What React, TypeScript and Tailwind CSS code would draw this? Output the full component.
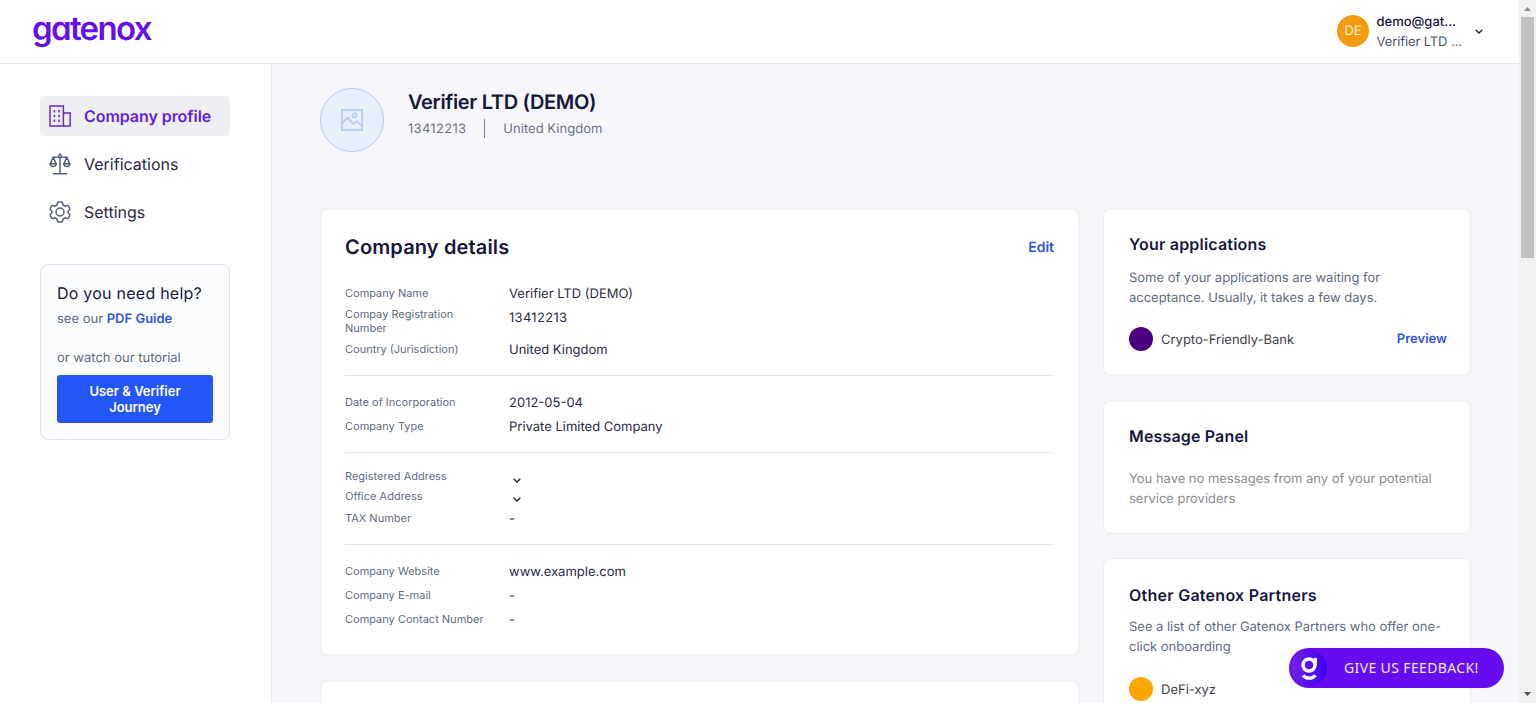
import type { ReactNode } from "react";

function Chevron({ className = "" }: { className?: string }) {
  return (
    <svg viewBox="0 0 8 5" className={className} fill="none" stroke="#23233b" strokeWidth="1.35">
      <path d="M0.7 0.7 L4 4 L7.3 0.7" />
    </svg>
  );
}

function BuildingIcon() {
  return (
    <svg viewBox="0 0 24 24" className="size-6" fill="none" stroke="#6a26d0" strokeWidth="1.5">
      <path d="M2 1.9H15.4V22H2ZM15.4 9.1H22.2V22H15.4" />
      <path d="M6.4 6V8.4M6.4 10.8V13.2M6.4 15.6V18M11 6V8.4M11 10.8V13.2M11 15.6V18" />
    </svg>
  );
}

function ScalesIcon() {
  return (
    <svg viewBox="0 0 24 24" className="size-6" fill="none" stroke="#53607b" strokeWidth="1.5" strokeLinecap="round" strokeLinejoin="round">
      <path d="M12 1.8V21.8M5.5 21.8H18.8M4.6 5.2H8.2C9.5 5.2 10.2 4.5 12 4.5C13.8 4.5 14.5 5.2 15.8 5.2H19.4" />
      <circle cx="12" cy="4.4" r="1.3" fill="#fff" />
      <path d="M5.2 5.4L2.2 11.8H8.2ZM18.8 5.4L15.8 11.8H21.8Z" />
      <path d="M2.2 11.8C2.4 15.4 8 15.4 8.2 11.8M15.8 11.8C16 15.4 21.6 15.4 21.8 11.8" />
    </svg>
  );
}

function GearIcon() {
  return (
    <svg viewBox="0 0 24 24" className="size-6" fill="none" stroke="#53607b" strokeWidth="1.5" strokeLinejoin="round">
      <circle cx="12" cy="12" r="4" />
      <path d="M10.4 2H13.6Q14.3 2 14.5 2.8L15 5L17 6.2L19.2 5.5Q19.9 5.3 20.3 5.9L21.8 8.6Q22.2 9.2 21.6 9.8L20 11.2V12.8L21.6 14.2Q22.2 14.8 21.8 15.4L20.3 18.1Q19.9 18.7 19.2 18.5L17 17.8L15 19L14.5 21.2Q14.3 22 13.6 22H10.4Q9.7 22 9.5 21.2L9 19L7 17.8L4.8 18.5Q4.1 18.7 3.7 18.1L2.2 15.4Q1.8 14.8 2.4 14.2L4 12.8V11.2L2.4 9.8Q1.8 9.2 2.2 8.6L3.7 5.9Q4.1 5.3 4.8 5.5L7 6.2L9 5L9.5 2.8Q9.7 2 10.4 2Z" />
    </svg>
  );
}

function PictureIcon() {
  return (
    <svg viewBox="0 0 22 22" className="size-[22px]" fill="none" stroke="#b3ccf8" strokeWidth="1.7" strokeLinejoin="round">
      <rect x="0.8" y="0.8" width="20.4" height="20.4" rx="0.8" />
      <circle cx="13.6" cy="6.4" r="2" />
      <path d="M0.8 14.8L6.5 8.7L12.6 15.2L15.7 12.3L21.2 17.2" />
    </svg>
  );
}

function FeedbackMark() {
  return (
    <svg viewBox="0 0 36 36" className="size-9" fill="none">
      <defs>
        <linearGradient id="mark" x1="0" x2="1">
          <stop offset="0" stopColor="#7420e2" />
          <stop offset="1" stopColor="#3d00f5" />
        </linearGradient>
      </defs>
      <circle cx="18" cy="18" r="18" fill="url(#mark)" />
      <circle cx="18" cy="15" r="6" stroke="#fff" strokeWidth="3.4" />
      <path d="M24.4 7.8V15.5" stroke="#fff" strokeWidth="3" />
      <path d="M12 25.2C15 29.2 21.5 29.2 24.4 25.2" stroke="#fff" strokeWidth="3.2" />
    </svg>
  );
}

function NavItem({ icon, label, active = false }: { icon: ReactNode; label: string; active?: boolean }) {
  return (
    <a className={`flex h-10 items-center gap-3 rounded px-2 text-base ${active ? "bg-[#eeeff3] font-semibold tracking-[-0.06px] text-[#6420d4]" : "text-[#2a2a44]"}`}>
      {icon}
      {label}
    </a>
  );
}

function Row({ label, value, className = "" }: { label: string; value: ReactNode; className?: string }) {
  return (
    <div className={`flex items-center ${className}`}>
      <dt className="w-[164px] shrink-0 pr-6 text-[11px] leading-[13px] text-[#5f6b80]">{label}</dt>
      <dd className="mt-0.5 text-[13px] leading-5 text-[#2a2a44]">{value}</dd>
    </div>
  );
}

function Card({ children, className = "" }: { children?: ReactNode; className?: string }) {
  return <section className={`shrink-0 rounded-lg border border-[#ededf2] bg-white ${className}`}>{children}</section>;
}

export default function App() {
  return (
    <div className="relative flex h-[703px] w-full overflow-hidden bg-[#f6f6fb] font-['Inter',sans-serif] text-[#17173a] [text-rendering:geometricPrecision]">
      <div className="flex min-w-0 flex-1 flex-col">
        <header className="flex h-16 shrink-0 items-center justify-between border-b border-[#e9e9ee] bg-white pr-9 pb-px pl-8">
          <div className="-mt-1.5 text-[33px] leading-none font-semibold tracking-[-1.65px] text-[#6611e6] [font-feature-settings:'cv11']">gatenox</div>
          <div className="flex items-center">
            <div className="flex size-8 items-center justify-center rounded-full bg-[#f39c12] pt-0.5 text-[13px] text-[#fdebd0]">DE</div>
            <div className="mt-0.5 ml-[7.5px] w-[98.5px] text-[13px] leading-5">
              <div className="font-medium">demo@gat...</div>
              <div className="tracking-[-0.1px] text-[#4b5468]">Verifier LTD ...</div>
            </div>
            <Chevron className="mt-px h-[5px] w-2" />
          </div>
        </header>
        <div className="flex min-h-0 flex-1">
          <aside className="w-[272px] shrink-0 border-r border-[#e9e9ee] bg-white pt-8 pr-[41px] pl-10">
            <nav className="flex flex-col gap-2">
              <NavItem icon={<BuildingIcon />} label="Company profile" active />
              <NavItem icon={<ScalesIcon />} label="Verifications" />
              <NavItem icon={<GearIcon />} label="Settings" />
            </nav>
            <div className="mt-8 h-44 rounded-lg border border-[#e3e5eb] bg-[#fbfcfe] px-4 pt-4">
              <div className="text-base leading-6 tracking-[0.24px]">Do you need help?</div>
              <div className="mt-1 text-[13px] leading-5 text-[#5f6b80]">
                see our <a className="font-semibold text-[#3056d9]">PDF Guide</a>
              </div>
              <div className="mt-[19px] text-[13px] leading-5 text-[#5f6b80]">or watch our tutorial</div>
              <button className="mt-[7px] h-12 w-full rounded-[3px] bg-[#2356f6] px-6 text-[13px] leading-4 font-semibold text-white">User &amp; Verifier Journey</button>
            </div>
          </aside>
          <main className="min-w-0 flex-1 overflow-hidden pt-6 pr-12 pl-12">
            <div className="flex h-16 gap-6">
              <div className="flex size-16 items-center justify-center rounded-full border border-[#b9c9f6] bg-[#e7f0fc]">
                <PictureIcon />
              </div>
              <div>
                <h1 className="text-xl leading-7 font-semibold tracking-[-0.32px]">Verifier LTD (DEMO)</h1>
                <div className="flex h-6 items-center text-[13px] text-[#6b7283]">
                  <span className="mt-[3px] tracking-[0.3px]">13412213</span>
                  <span className="mr-[18px] ml-[18px] h-[19px] w-px bg-[#7b8090]" />
                  <span className="mt-[3px] tracking-[0.03px]">United Kingdom</span>
                </div>
              </div>
            </div>
            <div className="mt-14 flex gap-6">
              <div className="flex w-[759px] shrink-0 flex-col gap-6">
                <Card className="h-[448px] px-6 pt-6">
                  <div className="flex h-7 items-center justify-between">
                    <h2 className="text-xl font-semibold tracking-[0.14px]">Company details</h2>
                    <a className="mt-0.5 text-sm font-semibold text-[#3056d9]">Edit</a>
                  </div>
                  <dl className="mt-5 h-[95px] border-b border-[#e6e7eb] pt-[2px]">
                    <Row label="Company Name" value="Verifier LTD (DEMO)" className="h-5" />
                    <div className="flex h-8 items-start pt-1">
                      <dt className="w-[164px] shrink-0 pr-6 text-[11px] leading-[14px] text-[#5f6b80]">Compay Registration Number</dt>
                      <dd className="mt-px text-[13px] leading-5 tracking-[0.3px] text-[#2a2a44]">13412213</dd>
                    </div>
                    <Row label="Country (Jurisdiction)" value="United Kingdom" className="mt-0.5 h-6" />
                  </dl>
                  <dl className="h-[77px] border-b border-[#e6e7eb] pt-[14px]">
                    <Row label="Date of Incorporation" value="2012-05-04" className="h-6" />
                    <Row label="Company Type" value="Private Limited Company" className="h-6" />
                  </dl>
                  <dl className="h-[92px] border-b border-[#e6e7eb] pt-[13px]">
                    <Row label="Registered Address" value={<Chevron className="mt-[7px] ml-1 h-[5px] w-2" />} className="h-5" />
                    <Row label="Office Address" value={<Chevron className="mt-1 ml-1 h-[5px] w-2" />} className="h-5" />
                    <Row label="TAX Number" value="-" className="h-6" />
                  </dl>
                  <dl className="pt-[14px]">
                    <Row label="Company Website" value="www.example.com" className="h-6" />
                    <Row label="Company E-mail" value="-" className="h-6" />
                    <Row label="Company Contact Number" value="-" className="h-6 [&_dt]:pr-0" />
                  </dl>
                </Card>
                <Card className="h-32" />
              </div>
              <div className="flex min-w-0 flex-1 flex-col gap-6 text-[13px] leading-5">
                <Card className="h-[168px] pt-[23px] pr-[23px] pl-[25px]">
                  <h3 className="text-base leading-6 font-semibold tracking-[0.2px]">Your applications</h3>
                  <p className="mt-3 tracking-[-0.02px] text-[#5f6b80]">Some of your applications are waiting for acceptance. Usually, it takes a few days.</p>
                  <div className="mt-[19px] flex h-6 items-center gap-2">
                    <span className="size-6 rounded-full bg-[#4b0082]" />
                    <span className="flex-1 pt-0.5 text-[#3e4045]">Crypto-Friendly-Bank</span>
                    <a className="font-semibold text-[#3056d9]">Preview</a>
                  </div>
                </Card>
                <Card className="h-[134px] pt-[23px] pr-[23px] pl-[25px]">
                  <h3 className="text-base leading-6 font-semibold tracking-[0.16px]">Message Panel</h3>
                  <p className="mt-[21px] tracking-[-0.02px] text-[#8b8d91]">You have no messages from any of your potential service providers</p>
                </Card>
                <Card className="h-60 pt-6 pr-[23px] pl-[25px]">
                  <h3 className="text-base leading-6 font-semibold tracking-[0.26px]">Other Gatenox Partners</h3>
                  <p className="mt-[10px] tracking-[-0.02px] text-[#5f6b80]">See a list of other Gatenox Partners who offer one-click onboarding</p>
                  <div className="mt-5 flex h-6 items-center gap-2">
                    <span className="size-6 rounded-full bg-[#ffa500]" />
                    <span className="pt-0.5 text-[#3e4045]">DeFi-xyz</span>
                  </div>
                </Card>
              </div>
            </div>
          </main>
        </div>
      </div>
      <div className="flex w-[17px] shrink-0 flex-col items-center bg-[#f1f1f1]">
        <svg viewBox="0 0 17 17" className="size-[17px]"><path d="M5 11L8.5 7L12 11Z" fill="#8b8b8b" /></svg>
        <div className="h-[241px] w-[13px] bg-[#c1c1c1]" />
        <svg viewBox="0 0 17 17" className="mt-auto size-[17px]"><path d="M5 6L8.5 10L12 6Z" fill="#4f4f4f" /></svg>
      </div>
      <button className="absolute right-8 bottom-[15px] flex h-10 w-[215px] items-center rounded-full bg-[#650df0] pl-[2px] text-white">
        <FeedbackMark />
        <span className="ml-[17px] font-['Noto_Sans',sans-serif] text-sm tracking-[0.37px] whitespace-nowrap text-[#f3e6ff]">GIVE US FEEDBACK!</span>
      </button>
    </div>
  );
}
